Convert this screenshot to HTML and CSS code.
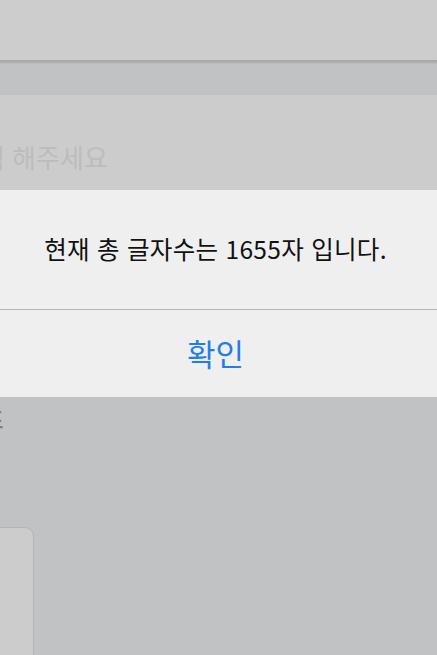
FILE: index.html
```html
<!DOCTYPE html>
<html lang="ko">
<head>
  <meta charset="UTF-8">
  <title>글자수 확인</title>
  <link rel="stylesheet" href="styles.css">
</head>
<body>

  <!-- 상단 바 -->
  <div class="topbar"></div>
  <div class="band"></div>

  <!-- 입력 영역 (잘려 보임) -->
  <div class="field">
    <span class="placeholder">입력 해주세요</span>
  </div>

  <!-- 알림 창 -->
  <div class="alert">
    <div class="alert-message">현재 총 글자수는 1655자 입니다.</div>
    <button class="alert-button">확인</button>
  </div>

  <!-- 아래쪽 내용 -->
  <div class="below">
    <span class="label">목표</span>
    <div class="box"></div>
  </div>

</body>
</html>
```

FILE: styles.css
```css
/* 기본 */
html, body {
  margin: 0;
  padding: 0;
}

body {
  width: 437px;
  height: 655px;
  overflow: hidden;
  background-color: #c1c2c4;
  font-family: "Noto Sans CJK KR", "Noto Sans", sans-serif;
}

/* 상단 바 */
.topbar {
  height: 60px;
  background-color: #cdcdcd;
  border-bottom: 2px solid #a9aaac;
  box-shadow: 0 1px 2px rgba(0, 0, 0, 0.12);
}

.band {
  height: 33px;
}

/* 입력 영역 */
.field {
  height: 95px;
  background-color: #cccccc;
  overflow: hidden;
  white-space: nowrap;
}

.placeholder {
  display: block;
  margin-top: 44px;
  margin-left: -43px;
  font-size: 26px;
  line-height: 36px;
  color: #bcbcbc;
}

/* 알림 창 */
.alert {
  background-color: #efeff0;
}

.alert-message {
  height: 120px;
  display: flex;
  align-items: center;
  justify-content: center;
  font-size: 24.5px;
  letter-spacing: 0.3px;
  color: #111;
  border-bottom: 1px solid #b5b5b6;
  padding: 0 6px 2px 0;
  box-sizing: border-box;
}

.alert-button {
  display: block;
  width: 100%;
  height: 87px;
  border: none;
  background: none;
  font-family: inherit;
  font-size: 31px;
  color: #1f7ee9;
  padding: 0 6px 2px 0;
}

/* 아래쪽 */
.below {
  overflow: hidden;
  height: 258px;
  white-space: nowrap;
}

.label {
  display: block;
  margin-top: 6px;
  margin-left: -37px;
  font-size: 22px;
  line-height: 30px;
  font-weight: bold;
  color: #7d7f84;
}

.box {
  margin-top: 94px;
  margin-left: -20px;
  width: 52px;
  height: 160px;
  background-color: #cccccc;
  border: 1.5px solid #b2b4b7;
  border-radius: 9px;
}
```
